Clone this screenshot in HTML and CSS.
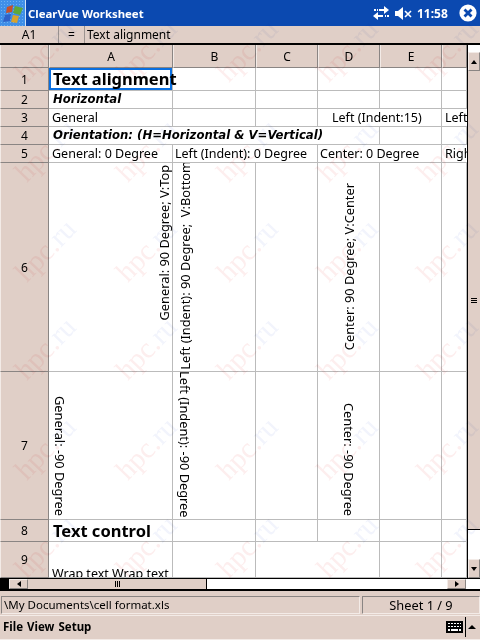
FILE: index.html
```html
<!DOCTYPE html>
<html>
<head>
    <title>ClearVue Worksheet</title>
    <link rel="stylesheet" href="styles.css">
</head>
<body>
<div class="screen">
    <header class="title-bar">
        <div class="start-btn">
            <svg width="26" height="26" viewBox="0 0 26 26">
                <path d="M7 7 L13 5 L12 12 L6 13 Z" fill="#c8502a"/>
                <path d="M15 6 L23 8 L20 15 L13 13 Z" fill="#5fa83a"/>
                <path d="M5 15 L11 14 L10 21 L3 22 Z" fill="#2f62c8"/>
                <path d="M13 15 L19 16 L17 23 L11 22 Z" fill="#d9a32c"/>
            </svg>
        </div>
        <div class="title-text">ClearVue Worksheet</div>
        <svg class="icon-sync" width="16" height="14" viewBox="0 0 16 14">
            <path d="M6 3h5V0l5 4-5 4V5H6z M4 3h1v2H4z M1 3h2v2H1z" fill="#fff"/>
            <path d="M10 9H5V6l-5 4 5 4v-3h5z M12 9h1v2h-1z M14 9h2v2h-2z" fill="#fff"/>
        </svg>
        <svg class="icon-vol" width="18" height="13" viewBox="0 0 18 13">
            <path d="M0 4h3l5-4v13L3 9H0z" fill="#fff"/>
            <path d="M10 4l6 6M16 4l-6 6" stroke="#fff" stroke-width="1.6"/>
        </svg>
        <div class="clock">11:58</div>
        <svg class="icon-close" width="18" height="18" viewBox="0 0 18 18">
            <circle cx="9" cy="9" r="8.6" fill="#fff"/>
            <path d="M5.5 5.5l7 7M12.5 5.5l-7 7" stroke="#0b49b0" stroke-width="2.8"/>
        </svg>
    </header>

    <div class="formula-bar">
        <div class="cell-ref">A1</div>
        <div class="cell-eq">=</div>
        <div class="cell-input">Text alignment</div>
    </div>

    <div class="sheet-wrap">
        <div class="sheet">
            <div class="hd corner"></div>
            <div class="hd">A</div>
            <div class="hd">B</div>
            <div class="hd">C</div>
            <div class="hd">D</div>
            <div class="hd">E</div>
            <div class="hd"></div>

            <div class="hd row-hd">1</div>
            <div class="c big selected">Text alignment</div>
            <div class="c"></div><div class="c"></div><div class="c"></div><div class="c"></div><div class="c"></div>

            <div class="hd row-hd">2</div>
            <div class="c bi">Horizontal</div>
            <div class="c"></div><div class="c"></div><div class="c"></div><div class="c"></div><div class="c"></div>

            <div class="hd row-hd">3</div>
            <div class="c">General</div>
            <div class="c"></div><div class="c"></div>
            <div class="c span-2 indent-15">Left (Indent:15)</div>
            <div class="c clip">Left</div>

            <div class="hd row-hd">4</div>
            <div class="c bi span-4">Orientation: (H=Horizontal &amp; V=Vertical)</div>
            <div class="c"></div><div class="c"></div>

            <div class="hd row-hd">5</div>
            <div class="c">General: 0 Degree</div>
            <div class="c span-2 tight">Left (Indent): 0 Degree</div>
            <div class="c span-2 tight">Center: 0 Degree</div>
            <div class="c clip">Righ</div>

            <div class="hd row-hd">6</div>
            <div class="c v-cell v-top-right"><span class="up">General: 90 Degree; V:Top</span></div>
            <div class="c v-cell v-bottom-left"><span class="up">Left (Indent): 90 Degree;&nbsp; V:Bottom</span></div>
            <div class="c"></div>
            <div class="c v-cell v-center"><span class="up">Center: 90 Degree; V:Center</span></div>
            <div class="c"></div><div class="c"></div>

            <div class="hd row-hd">7</div>
            <div class="c v-cell v-bottom-left pad-a7"><span class="down">General: -90 Degree</span></div>
            <div class="c v-cell v-bottom-left"><span class="down">Left (Indent): -90 Degree</span></div>
            <div class="c"></div>
            <div class="c v-cell v-bottom-center"><span class="down">Center: -90 Degree</span></div>
            <div class="c"></div><div class="c"></div>

            <div class="hd row-hd">8</div>
            <div class="c big">Text control</div>
            <div class="c"></div><div class="c"></div><div class="c"></div><div class="c"></div><div class="c"></div>

            <div class="hd row-hd">9</div>
            <div class="c wrap-cell">Wrap text Wrap text</div>
            <div class="c"></div>
            <div class="c span-2"></div>
            <div class="c"></div><div class="c"></div>
        </div>

        <div class="vscroll">
            <div class="vs-top"></div>
            <div class="sb-btn"><span class="arr-up"></span></div>
            <div class="vs-thumb"><span class="grip-h"></span></div>
            <div class="vs-track"></div>
            <div class="sb-btn"><span class="arr-down"></span></div>
        </div>
    </div>

    <div class="hscroll">
        <div class="hs-lead"></div>
        <div class="sb-btn hs-btn"><span class="arr-left"></span></div>
        <div class="hs-thumb"><span class="grip-v"></span></div>
        <div class="hs-track"></div>
        <div class="sb-btn hs-btn"><span class="arr-right"></span></div>
        <div class="hs-corner"></div>
    </div>

    <div class="status-bar">
        <div class="status-path">\My Documents\cell format.xls</div>
        <div class="status-sheet">Sheet 1 / 9</div>
    </div>

    <footer class="menu-bar">
        <span class="menu-item">File</span>
        <span class="menu-item">View</span>
        <span class="menu-item">Setup</span>
        <svg class="icon-kbd" width="17" height="12" viewBox="0 0 17 12">
            <rect width="17" height="12" fill="#000"/>
            <path d="M2 2h2v1H2zM5 2h2v1H5zM8 2h2v1H8zM11 2h2v1h-2zM14 2h1v1h-1zM2 5h2v1H2zM5 5h2v1H5zM8 5h2v1H8zM11 5h2v1h-2zM14 5h1v1h-1zM2 8h2v2H2zM5 8h7v2H5zM13 8h2v2h-2z" fill="#fff"/>
        </svg>
        <div class="menu-sep"></div>
        <span class="arr-up menu-arrow"></span>
    </footer>

    <div class="watermarks">
        <span class="wm w1">hpc.<i>ru</i></span><span class="wm w2">hpc.<i>ru</i></span><span class="wm w3">hpc.<i>ru</i></span><span class="wm w4">hpc.<i>ru</i></span><span class="wm w5">hpc.<i>ru</i></span>
        <span class="wm w1 r2">hpc.<i>ru</i></span><span class="wm w2 r2">hpc.<i>ru</i></span><span class="wm w3 r2">hpc.<i>ru</i></span><span class="wm w4 r2">hpc.<i>ru</i></span><span class="wm w5 r2">hpc.<i>ru</i></span>
        <span class="wm w1 r3">hpc.<i>ru</i></span><span class="wm w2 r3">hpc.<i>ru</i></span><span class="wm w3 r3">hpc.<i>ru</i></span><span class="wm w4 r3">hpc.<i>ru</i></span><span class="wm w5 r3">hpc.<i>ru</i></span>
        <span class="wm w1 r4">hpc.<i>ru</i></span><span class="wm w2 r4">hpc.<i>ru</i></span><span class="wm w3 r4">hpc.<i>ru</i></span><span class="wm w4 r4">hpc.<i>ru</i></span><span class="wm w5 r4">hpc.<i>ru</i></span>
        <span class="wm w1 r5">hpc.<i>ru</i></span><span class="wm w2 r5">hpc.<i>ru</i></span><span class="wm w3 r5">hpc.<i>ru</i></span><span class="wm w4 r5">hpc.<i>ru</i></span><span class="wm w5 r5">hpc.<i>ru</i></span>
        <span class="wm w1 r6">hpc.<i>ru</i></span><span class="wm w2 r6">hpc.<i>ru</i></span><span class="wm w3 r6">hpc.<i>ru</i></span><span class="wm w4 r6">hpc.<i>ru</i></span><span class="wm w5 r6">hpc.<i>ru</i></span>
    </div>
</div>
</body>
</html>
```
FILE: styles.css
```css
* {
    box-sizing: border-box;
}
body {
    margin: 0;
    background: #e0cfc7;
    font-family: "Noto Sans", "Liberation Sans", sans-serif;
    font-size: 12.5px;
    color: #000;
}
.screen {
    position: relative;
    width: 480px;
    height: 640px;
    overflow: hidden;
    display: flex;
    flex-direction: column;
    background: #e0cfc7;
}

/* title bar */
.title-bar {
    height: 26px;
    background: #0b49b0;
    display: flex;
    align-items: center;
    color: #fff;
}
.start-btn {
    width: 26px;
    height: 26px;
    background-color: #3f8fe8;
    background-image: radial-gradient(#6db0f2 1px, transparent 1px);
    background-size: 3px 3px;
    border-right: 1px solid #cfe0f5;
}
.title-text {
    flex: 1;
    margin-left: 2px;
    font-weight: bold;
    font-size: 11.4px;
}
.icon-sync {
    margin-right: 6px;
}
.icon-vol {
    margin-right: 4px;
}
.clock {
    font-weight: bold;
    font-size: 12px;
    width: 31px;
    margin-right: 11px;
}
.icon-close {
    margin-right: 3px;
}

/* formula bar */
.formula-bar {
    height: 19px;
    display: flex;
    border-bottom: 2px solid #000;
    font-size: 12px;
}
.cell-ref {
    width: 59px;
    text-align: center;
    border-right: 1px solid #9c9490;
}
.cell-eq {
    width: 26px;
    text-align: center;
    border-right: 1px solid #9c9490;
}
.cell-input {
    padding-left: 2px;
}
.formula-bar div {
    line-height: 17px;
}

/* sheet */
.sheet-wrap {
    height: 533px;
    display: flex;
}
.sheet {
    width: 467px;
    background: #fff;
    display: grid;
    grid-template-columns: 49px 124px 83px 62px 62px 62px 25px;
    grid-template-rows: 23px 23px 18px 18px 18px 18px 209px 148px 22px 36px;
    overflow: hidden;
}
.hd {
    background: #e0cfc7;
    border-right: 1px solid #8a8583;
    border-bottom: 1px solid #8a8583;
    border-left: 1px solid #f3ebe7;
    display: flex;
    align-items: center;
    justify-content: center;
    font-size: 12px;
}
.c {
    border-right: 1px solid #bbb;
    border-bottom: 1px solid #bbb;
    padding: 0 0 0 3px;
    white-space: nowrap;
    line-height: 17px;
    min-width: 0;
}
.span-2 {
    grid-column: span 2;
}
.span-4 {
    grid-column: span 4;
}
.tight {
    padding-left: 2px;
}
.indent-15 {
    padding-left: 14px;
}
.clip {
    overflow: hidden;
    border-right: 0;
}
.big {
    font-size: 16.5px;
    font-weight: bold;
    line-height: 22px;
    padding-left: 4px;
}
.bi {
    font-family: "DejaVu Sans", sans-serif;
    font-size: 11.7px;
    font-weight: bold;
    font-style: italic;
    padding-left: 4px;
}
.selected {
    position: relative;
    z-index: 1;
}
.selected::before {
    content: "";
    position: absolute;
    inset: 0;
    z-index: -1;
    border: 2px solid #0a6fe0;
}
.wrap-cell {
    padding-top: 23px;
    overflow: hidden;
}

/* rotated text cells */
.v-cell {
    display: flex;
    overflow: hidden;
    padding: 0;
    font-size: 12.8px;
}
.up {
    writing-mode: vertical-rl;
    transform: rotate(180deg);
    line-height: 14px;
}
.down {
    writing-mode: vertical-rl;
    line-height: 14px;
}
.v-top-right {
    justify-content: flex-end;
    align-items: flex-start;
    padding: 2px 1px 0 0;
}
.v-bottom-left {
    justify-content: flex-start;
    align-items: flex-end;
    padding: 0 0 1px 5px;
}
.v-center {
    justify-content: center;
    align-items: center;
}
.v-bottom-center {
    justify-content: center;
    align-items: flex-end;
    padding-bottom: 3px;
}
.pad-a7 {
    padding-left: 4px;
    padding-bottom: 3px;
}

/* scrollbars */
.vscroll {
    width: 13px;
    background: #fff;
    border-left: 1px solid #000;
    display: flex;
    flex-direction: column;
}
.vs-top {
    height: 7px;
}
.sb-btn {
    height: 19px;
    background: #e0cfc7;
    border: 1px solid #8a8583;
    border-top-color: #f3ebe7;
    border-left-color: #f3ebe7;
    display: flex;
    align-items: center;
    justify-content: center;
}
.vs-thumb {
    height: 459px;
    background: #e0cfc7;
    border-bottom: 1px solid #000;
    display: flex;
    align-items: center;
    justify-content: center;
}
.vs-track {
    flex: 1;
}
.arr-up {
    border-left: 3px solid transparent;
    border-right: 3px solid transparent;
    border-bottom: 4px solid #000;
}
.arr-down {
    border-left: 3px solid transparent;
    border-right: 3px solid transparent;
    border-top: 4px solid #000;
}
.arr-left {
    border-top: 3px solid transparent;
    border-bottom: 3px solid transparent;
    border-right: 4px solid #000;
}
.arr-right {
    border-top: 3px solid transparent;
    border-bottom: 3px solid transparent;
    border-left: 4px solid #000;
}
.grip-h {
    width: 6px;
    height: 5px;
    border-top: 1px solid #000;
    border-bottom: 1px solid #000;
    background: linear-gradient(#000, #000) center / 100% 1px no-repeat;
}
.grip-v {
    width: 5px;
    height: 6px;
    border-left: 1px solid #000;
    border-right: 1px solid #000;
    background: linear-gradient(#000, #000) center / 1px 100% no-repeat;
}
.hscroll {
    height: 13px;
    background: #fff;
    display: flex;
    border-top: 1px solid #000;
    border-bottom: 2px solid #000;
}
.hs-lead {
    width: 9px;
    background: #000;
}
.hs-btn {
    width: 19px;
    height: 10px;
}
.hs-thumb {
    width: 179px;
    background: #e0cfc7;
    border-right: 1px solid #000;
    display: flex;
    align-items: center;
    justify-content: center;
}
.hs-track {
    flex: 1;
}
.hs-corner {
    width: 14px;
}

/* status and menu */
.status-bar {
    margin-top: 5px;
    height: 18px;
    display: flex;
    gap: 2px;
    padding: 0 0 0 1px;
}
.status-path {
    width: 359px;
    border: 1px solid #8a8583;
    border-right-color: #f3ebe7;
    border-bottom-color: #f3ebe7;
    padding-left: 2px;
    line-height: 16px;
    font-size: 11.5px;
}
.status-sheet {
    flex: 1;
    border: 1px solid #8a8583;
    border-right-color: #f3ebe7;
    border-bottom-color: #f3ebe7;
    text-align: center;
    line-height: 16px;
    font-size: 12.8px;
}
.menu-bar {
    margin-top: 1px;
    flex: 1;
    display: flex;
    align-items: center;
    padding: 0 0 2px 3px;
    border-top: 1px solid #f3ebe7;
    border-bottom: 1px solid #f3ebe7;
}
.menu-item {
    font-weight: bold;
    font-size: 11.5px;
    margin-right: 4px;
}
.icon-kbd {
    margin-left: auto;
    margin-right: 2px;
}
.menu-sep {
    width: 1px;
    height: 20px;
    background: #000;
}
.menu-arrow {
    margin: 0 4px 0 2px;
    border-left-width: 4px;
    border-right-width: 4px;
}

/* hpc.ru watermark over the whole shot */
.watermarks {
    position: absolute;
    inset: 0;
    pointer-events: none;
    mix-blend-mode: multiply;
}
.wm {
    position: absolute;
    top: 50px;
    width: 90px;
    margin: -16px 0 0 -45px;
    text-align: center;
    font-family: "Liberation Serif", serif;
    font-size: 29px;
    line-height: 32px;
    color: #fdeeee;
    transform: rotate(-46deg);
}
.wm i {
    font-style: normal;
    color: #f2f4fc;
}
.w1 { left: 45px; }
.w2 { left: 146px; }
.w3 { left: 247px; }
.w4 { left: 347px; }
.w5 { left: 447px; }
.r2 { top: 150px; }
.r3 { top: 250px; }
.r4 { top: 348px; }
.r5 { top: 448px; }
.r6 { top: 546px; }
```
